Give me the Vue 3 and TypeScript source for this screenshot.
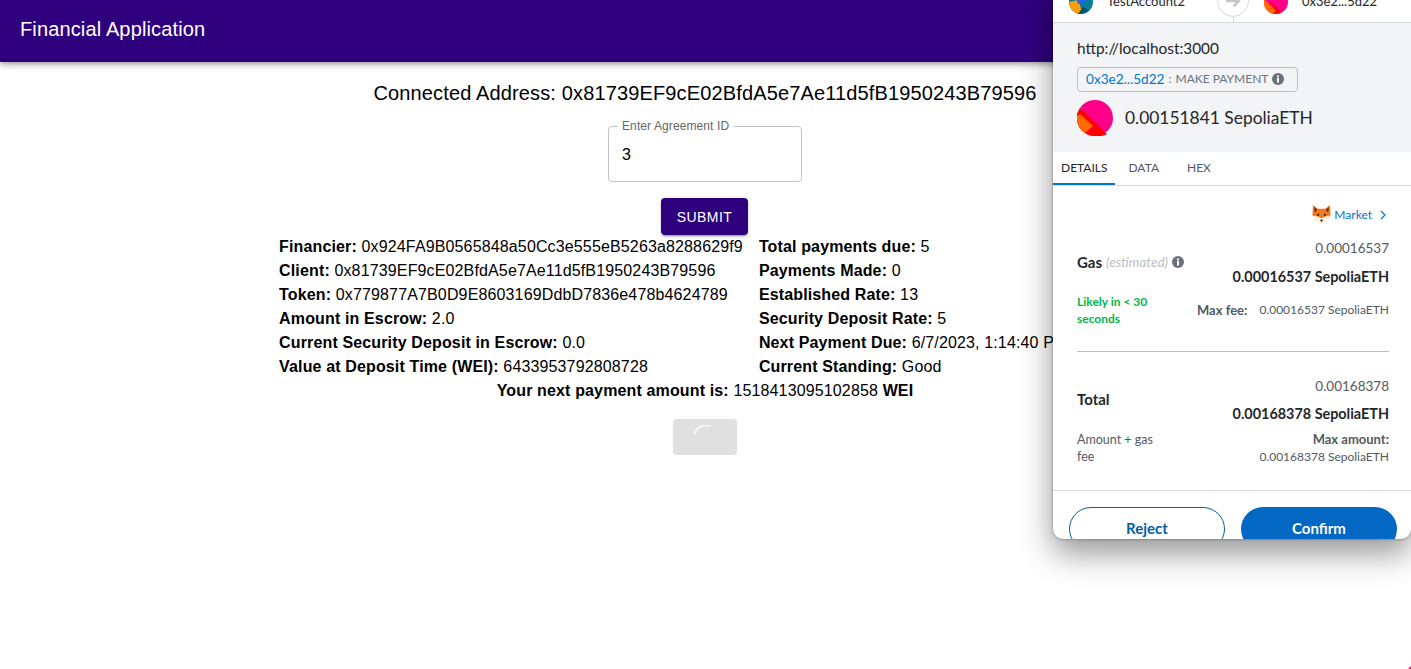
<script setup lang="ts">
interface InfoRow {
  label: string
  value: string
}

const leftRows: InfoRow[] = [
  { label: 'Financier:', value: '0x924FA9B0565848a50Cc3e555eB5263a8288629f9' },
  { label: 'Client:', value: '0x81739EF9cE02BfdA5e7Ae11d5fB1950243B79596' },
  { label: 'Token:', value: '0x779877A7B0D9E8603169DdbD7836e478b4624789' },
  { label: 'Amount in Escrow:', value: '2.0' },
  { label: 'Current Security Deposit in Escrow:', value: '0.0' },
  { label: 'Value at Deposit Time (WEI):', value: '6433953792808728' },
]

const rightRows: InfoRow[] = [
  { label: 'Total payments due:', value: '5' },
  { label: 'Payments Made:', value: '0' },
  { label: 'Established Rate:', value: '13' },
  { label: 'Security Deposit Rate:', value: '5' },
  { label: 'Next Payment Due:', value: '6/7/2023, 1:14:40 PM' },
  { label: 'Current Standing:', value: 'Good' },
]
</script>

<template>
  <div class="page">
    <header class="appbar">Financial Application</header>

    <main class="content">
      <h2 class="address">Connected Address: 0x81739EF9cE02BfdA5e7Ae11d5fB1950243B79596</h2>

      <fieldset class="field">
        <legend>Enter Agreement ID</legend>
        <span class="field-value">3</span>
      </fieldset>

      <button class="submit">SUBMIT</button>

      <div class="info">
        <div class="info-col">
          <div v-for="row in leftRows" :key="row.label"><b>{{ row.label }}</b> {{ row.value }}</div>
        </div>
        <div class="info-col right">
          <div v-for="row in rightRows" :key="row.label"><b>{{ row.label }}</b> {{ row.value }}</div>
        </div>
      </div>

      <div class="next-payment"><b>Your next payment amount is:</b> 1518413095102858 <b>WEI</b></div>

      <button class="pay" disabled>
        <svg width="24" height="24" viewBox="0 0 24 24" fill="none">
          <path d="M1.600 8.600A12 12 0 0 1 17 1.200" stroke="#f7f7f7" stroke-width="1.800" stroke-linecap="round" />
        </svg>
      </button>
    </main>

    <aside class="popup">
      <div class="accounts">
        <svg class="acct-icon" viewBox="0 0 24 24">
          <circle cx="12" cy="12" r="12" fill="#057e98" />
          <path d="M0 12l9-2 5 14H12A12 12 0 0 1 0 12z" fill="#fb9d0a" />
          <path d="M5 0h7l6 11-9 3-2-6z" fill="#2f62ea" />
          <path d="M9 24l5-7 6 3a12 12 0 0 1-8 4z" fill="#04507a" />
        </svg>
        <span class="acct-name first">TestAccount2</span>
        <div class="arrow-wrap">
          <div class="arrow">
            <svg width="16" height="14" viewBox="0 0 16 14" fill="none">
              <path d="M1 7h13M8.500 1.500 14 7l-5.500 5.500" stroke="#c4c7ca" stroke-width="2.500" />
            </svg>
          </div>
        </div>
        <svg class="acct-icon second" viewBox="0 0 24 24">
          <circle cx="12" cy="12" r="12" fill="#ff0088" />
          <path d="M0 9l15 15H8A12 12 0 0 1 0 12z" fill="#ff6a00" />
          <path d="M5 11l13 11a12 12 0 0 1-6 2l-3-1 3-2z" fill="#ff0000" />
        </svg>
        <span class="acct-name">0x3e2...5d22</span>
      </div>

      <section class="summary">
        <div class="origin">http://localhost:3000</div>
        <div class="method">
          <span class="method-addr">0x3e2...5d22</span>
          <span class="method-sep">:</span>
          <span>MAKE PAYMENT</span>
          <svg class="info-icon" viewBox="0 0 12 12">
            <circle cx="6" cy="6" r="6" fill="#6a737d" />
            <rect x="5" y="5" width="2" height="4.500" fill="#fff" />
            <rect x="5" y="2.500" width="2" height="1.800" fill="#fff" />
          </svg>
        </div>
        <div class="amount">
          <svg class="amount-icon" viewBox="0 0 36 36">
            <circle cx="18" cy="18" r="18" fill="#ff0088" />
            <path d="M0 14 3 8 30 34a18 18 0 0 1-12 2A18 18 0 0 1 0 18z" fill="#ff0000" />
            <path d="M0 16 3 14 16 26 8 33A18 18 0 0 1 0 18z" fill="#ff6a00" />
            <path d="M2 10l2-2 1 1-3 2z" fill="#0a8f6f" />
          </svg>
          <span class="amount-text">0.00151841 SepoliaETH</span>
        </div>
      </section>

      <nav class="tabs">
        <span class="tab active">DETAILS</span>
        <span class="tab">DATA</span>
        <span class="tab">HEX</span>
      </nav>

      <section class="details">
        <div class="market">
          <svg class="fox" viewBox="0 0 20 20">
            <path d="M1 0l5 4h8l5-4 .5 11-4 5-5.500 3-5.500-3-4-5z" fill="#f07a1c" />
            <path d="M2.200 2 5.500 5 3 8zM17.800 2 14.500 5 17 8z" fill="#5e2a10" />
            <path d="M.6 11l5.400 1 4 2 4-2 5.400-1-4 5.500L10 20l-5.400-3.500z" fill="#fdf0e2" />
            <circle cx="6.400" cy="10.300" r="1.100" fill="#20120c" />
            <circle cx="13.600" cy="10.300" r="1.100" fill="#20120c" />
            <path d="M8.300 15.500h3.400L10 18z" fill="#20120c" />
          </svg>
          <span>Market</span>
          <svg class="chevron" width="6" height="10" viewBox="0 0 6 10" fill="none">
            <path d="M1 1l4 4-4 4" stroke="#0376c9" stroke-width="1.200" />
          </svg>
        </div>

        <div class="fee gas">
          <div class="fee-label">
            <b>Gas</b>
            <i>(estimated)</i>
            <svg class="info-icon" viewBox="0 0 12 12">
              <circle cx="6" cy="6" r="6" fill="#6a737d" />
              <rect x="5" y="5" width="2" height="4.500" fill="#fff" />
              <rect x="5" y="2.500" width="2" height="1.800" fill="#fff" />
            </svg>
          </div>
          <div class="fee-plain">0.00016537</div>
          <div class="fee-bold">0.00016537 SepoliaETH</div>
          <div class="fee-note likely">Likely in &lt; 30 seconds</div>
          <div class="fee-max"><b class="max-label">Max fee:</b><span>0.00016537 SepoliaETH</span></div>
        </div>

        <div class="fee total">
          <div class="fee-label"><b>Total</b></div>
          <div class="fee-plain">0.00168378</div>
          <div class="fee-bold">0.00168378 SepoliaETH</div>
          <div class="fee-note">Amount + gas fee</div>
          <div class="fee-max stacked"><b class="max-label">Max amount:</b><span>0.00168378 SepoliaETH</span></div>
        </div>
      </section>

      <footer class="actions">
        <button class="reject">Reject</button>
        <button class="confirm">Confirm</button>
      </footer>
    </aside>

    <div class="corner"></div>
  </div>
</template>

<style>
html,
body {
  margin: 0;
  background: #fff;
  overflow: hidden;
}
</style>

<style scoped>
.page {
  position: relative;
  width: 1411px;
  height: 669px;
  overflow: hidden;
  font-family: "Liberation Sans", Arial, sans-serif;
  color: #000;
}

.appbar {
  height: 62px;
  padding: 0 20px 4px;
  display: flex;
  align-items: center;
  box-sizing: border-box;
  background: #2f007e;
  color: #fff;
  font-size: 20px;
  letter-spacing: 0.14px;
  box-shadow: 0 2px 4px -1px rgba(0, 0, 0, 0.2), 0 4px 5px rgba(0, 0, 0, 0.14), 0 1px 10px rgba(0, 0, 0, 0.12);
}

.content {
  display: flex;
  flex-direction: column;
  align-items: center;
  padding-right: 1px;
}

.address {
  margin: 19px 0 0;
  font-size: 20px;
  font-weight: 400;
  line-height: 24px;
  letter-spacing: 0.14px;
}

.field {
  box-sizing: border-box;
  width: 194px;
  height: 63px;
  margin: 14px 0 0;
  padding: 0 13px;
  border: 1px solid #c4c4c4;
  border-radius: 4px;
  display: block;
}

.field legend {
  padding: 0 5px 0 4px;
  margin-left: -4px;
  font-size: 12px;
  line-height: 14px;
  letter-spacing: 0.1px;
  color: #666;
}

.field-value {
  display: block;
  font-size: 16px;
  line-height: 19px;
  margin-top: 12px;
}

.submit {
  width: 87px;
  height: 37px;
  margin: 16px 1px 0 0;
  border: 0;
  border-radius: 4px;
  background: #2f007e;
  color: #fff;
  font-family: inherit;
  font-size: 14px;
  letter-spacing: 0.4px;
  box-shadow: 0 3px 1px -2px rgba(0, 0, 0, 0.2), 0 2px 2px rgba(0, 0, 0, 0.14), 0 1px 5px rgba(0, 0, 0, 0.12);
}

.info {
  display: flex;
  gap: 16px;
  font-size: 16px;
  line-height: 24px;
  letter-spacing: 0.14px;
  white-space: nowrap;
}

.info-col.right {
  min-width: 372px;
}

.next-payment {
  font-size: 16px;
  line-height: 24px;
  letter-spacing: 0.14px;
}

.pay {
  width: 64px;
  height: 36px;
  margin-top: 16px;
  padding: 0;
  border: 0;
  border-radius: 4px;
  background: #e0e0e0;
  display: flex;
  align-items: center;
  justify-content: center;
}

.popup {
  position: absolute;
  top: -20px;
  left: 1053px;
  width: 358px;
  height: 559px;
  display: flex;
  flex-direction: column;
  overflow: hidden;
  background: #fff;
  border-radius: 0 0 10px 10px;
  box-shadow: 0 14px 32px rgba(0, 0, 0, 0.42), 0 0 3px rgba(0, 0, 0, 0.4);
  font-family: Lato, "Open Sans", sans-serif;
  color: #24272a;
}

.accounts {
  flex: none;
  height: 43px;
  box-sizing: border-box;
  border-bottom: 1px solid #d6d9dc;
  padding-left: 16px;
  display: flex;
  align-items: center;
}

.acct-icon {
  width: 24px;
  height: 24px;
  margin-top: 2px;
}

.acct-icon.second {
  margin-left: 15px;
}

.acct-name {
  margin-left: 14px;
  font-size: 13px;
  color: #24272a;
}

.acct-name.first {
  width: 110px;
}

.arrow-wrap {
  position: relative;
  width: 32px;
  height: 32px;
}

.arrow-wrap::after {
  content: "";
  position: absolute;
  left: 16px;
  top: 32px;
  width: 1px;
  height: 6px;
  background: #d6d9dc;
}

.arrow {
  width: 32px;
  height: 32px;
  box-sizing: border-box;
  border: 1px solid #d6d9dc;
  border-radius: 50%;
  display: flex;
  align-items: center;
  justify-content: center;
}

.summary {
  flex: none;
  height: 129px;
  box-sizing: border-box;
  padding: 16px 24px 0;
  background: #f2f4f6;
}

.origin {
  font-size: 15.400px;
  line-height: 18px;
}

.method {
  box-sizing: border-box;
  width: 221px;
  height: 25px;
  margin-top: 10px;
  padding: 0 8px 2px;
  display: flex;
  align-items: center;
  gap: 4px;
  border: 1px solid #bbc0c5;
  border-radius: 4px;
  font-size: 12px;
  color: #6a737d;
  white-space: nowrap;
}

.method-addr {
  color: #0376c9;
  font-size: 13.600px;
}

.info-icon {
  width: 12px;
  height: 12px;
  vertical-align: -1px;
}

.amount {
  display: flex;
  align-items: center;
  gap: 12px;
  margin-top: 8px;
  font-size: 17.400px;
}

.amount-text {
  margin-bottom: 2px;
}

.amount-icon {
  width: 36px;
  height: 36px;
}

.tabs {
  flex: none;
  height: 34px;
  box-sizing: border-box;
  border-bottom: 1px solid #d6d9dc;
  display: flex;
  font-size: 12px;
  color: #535a61;
}

.tab {
  padding: 0 8px;
  line-height: 32px;
  margin-right: 5px;
}

.tab:nth-child(3) {
  margin-left: 7px;
}

.tab.active {
  color: #24272a;
  border-bottom: 2px solid #0376c9;
  height: 31px;
  margin-bottom: -1px;
}

.details {
  flex: none;
  height: 305px;
  box-sizing: border-box;
  border-bottom: 1px solid #d6d9dc;
  padding: 19px 22px 0 24px;
}

.market {
  height: 19px;
  display: flex;
  align-items: center;
  justify-content: flex-end;
  gap: 3px;
  margin-right: 3px;
  font-size: 12px;
  color: #0376c9;
}

.fox {
  width: 19px;
  height: 19px;
}

.chevron {
  margin-left: 5px;
}

.fee {
  display: grid;
  grid-template-columns: auto 1fr;
  grid-template-rows: 28px 28px auto;
  align-items: center;
  font-size: 14px;
}

.gas {
  margin-top: 10px;
  padding-bottom: 22px;
  border-bottom: 1px solid #bbc0c5;
}

.total {
  margin-top: 19px;
}

.total .fee-plain {
  padding-top: 2px;
}

.fee-label {
  grid-row: 1 / 3;
  grid-column: 1;
  display: flex;
  align-items: center;
  gap: 4px;
  white-space: nowrap;
}

.fee-label b {
  font-size: 15px;
  font-weight: 700;
}

.fee-label i {
  font-size: 13.500px;
  color: #bbc0c5;
}

.fee-plain,
.fee-bold {
  grid-column: 2;
  text-align: right;
}

.fee-plain {
  font-size: 13.500px;
  color: #535a61;
}

.fee-bold {
  font-size: 14.400px;
  font-weight: 700;
}

.fee-note {
  width: 90px;
  font-size: 12.500px;
  line-height: 17px;
  color: #535a61;
  padding-top: 4px;
}

.likely {
  font-size: 12px;
  color: #00b74a;
  font-weight: 700;
  padding: 3px 0 2px;
}

.fee-max {
  display: flex;
  justify-content: flex-end;
  gap: 12px;
  font-size: 12px;
  color: #535a61;
}

.max-label {
  font-size: 13px;
}

.fee-max.stacked {
  flex-direction: column;
  align-items: flex-end;
  gap: 0;
  line-height: 17px;
  padding-top: 4px;
}

.actions {
  flex: none;
  display: flex;
  gap: 16px;
  padding: 16px 14px 0 16px;
}

.actions button {
  flex: none;
  width: 156px;
  height: 44px;
  padding-bottom: 3px;
  border-radius: 22px;
  font-family: inherit;
  font-size: 15px;
  font-weight: 700;
}

.reject {
  border: 1px solid #0260a4;
  background: #fff;
  color: #0260a4;
}

.confirm {
  border: 0;
  background: #0367c4;
  color: #fff;
}

.corner {
  position: absolute;
  right: 0;
  bottom: 0;
  width: 0;
  height: 0;
  border-left: 3px solid transparent;
  border-bottom: 3px solid #d81b60;
}
</style>
